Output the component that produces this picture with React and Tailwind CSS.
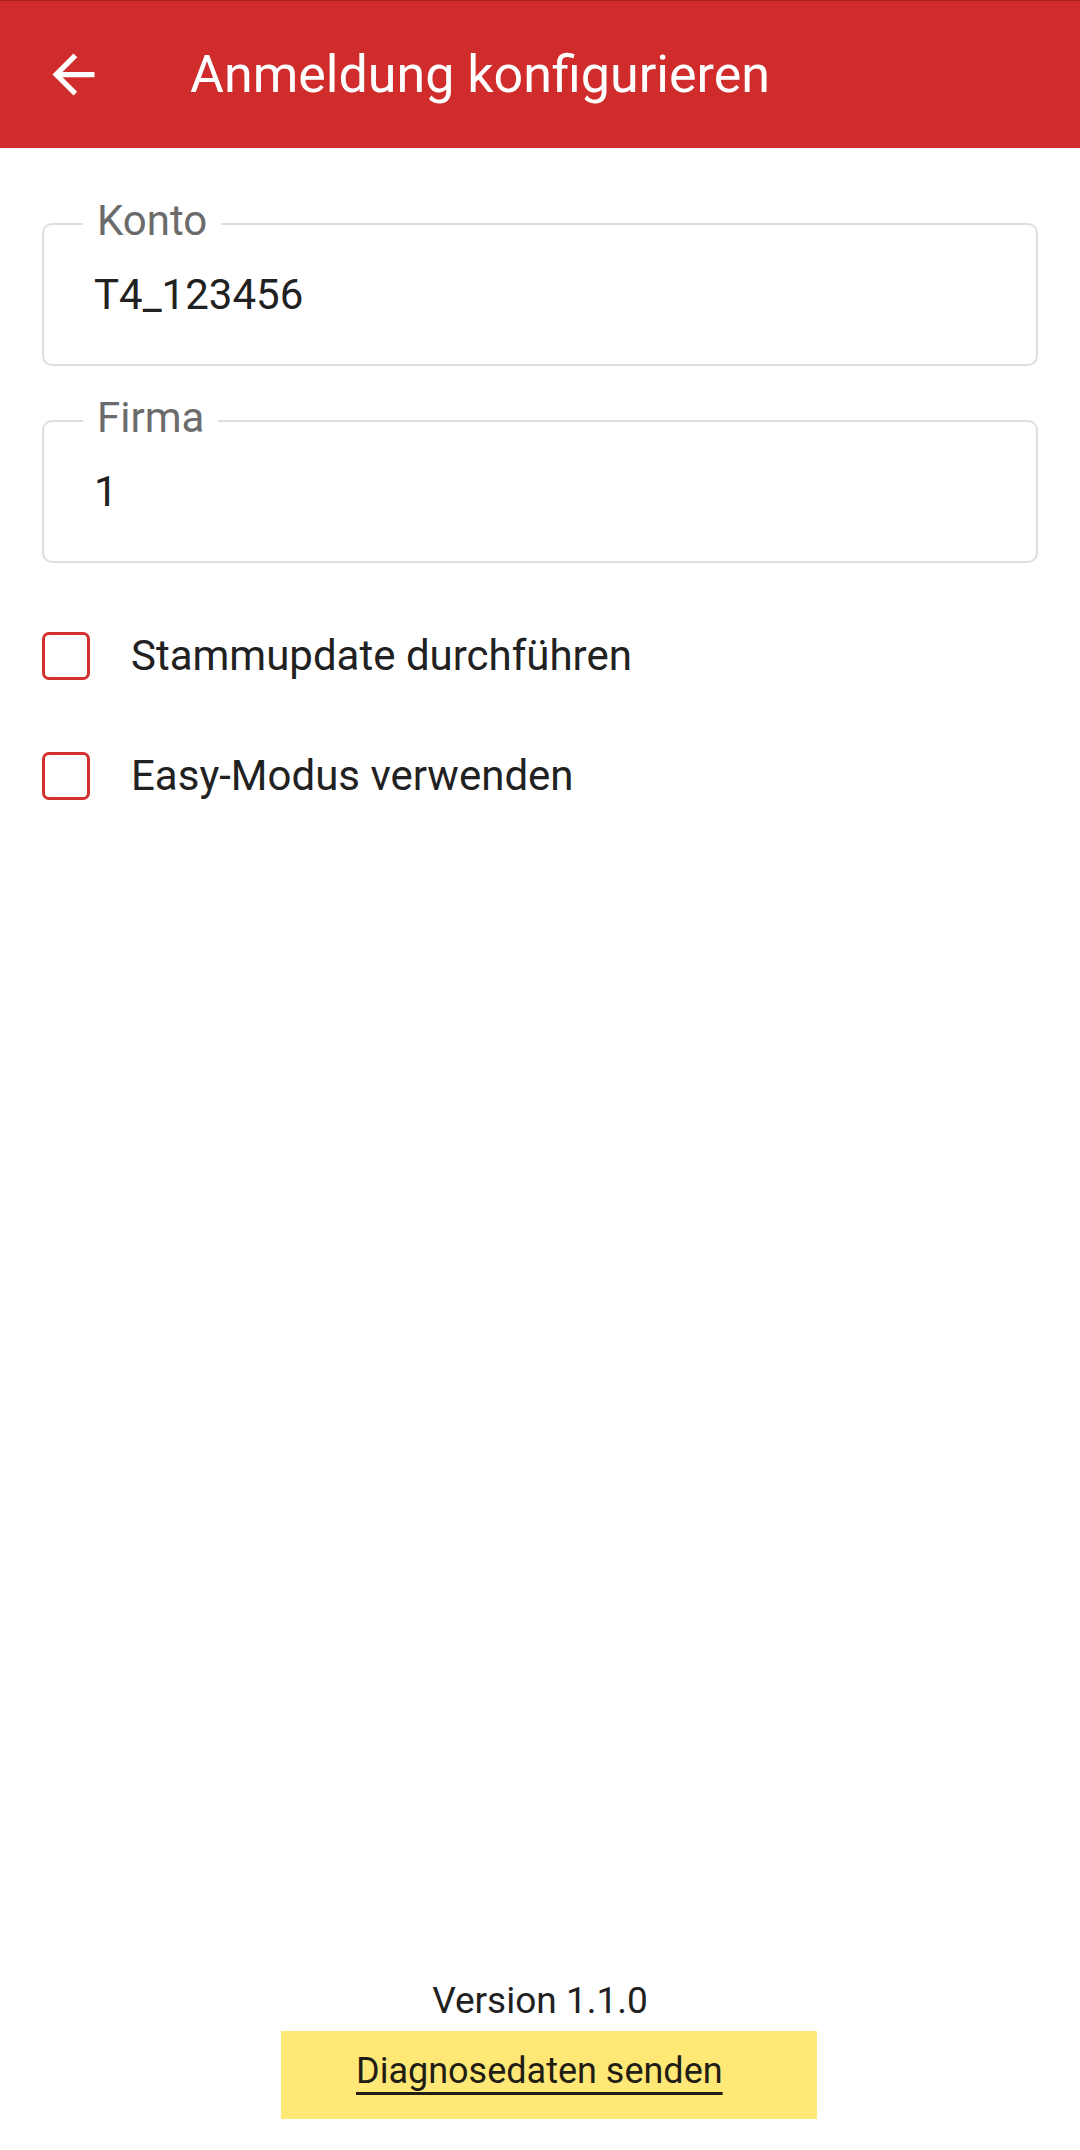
import { useState } from 'react';

const font = { fontFamily: 'Roboto, "Noto Sans", sans-serif' };

function OutlinedField({ label, value }) {
  return (
    <div className="relative h-[143px] border-2 border-[#dedede] rounded-[10px] flex items-center pl-[50px]">
      <span className="absolute -top-[28px] left-[39px] bg-white px-[14px] text-[42px] leading-[48px] text-[#6b6b6b]">
        {label}
      </span>
      <span className="text-[42px] leading-[48px] text-[#212121]">{value}</span>
    </div>
  );
}

function CheckRow({ label, checked, onToggle }) {
  return (
    <button onClick={onToggle} className="h-[120px] flex items-center text-left">
      <span className={`w-[48px] h-[48px] border-[3px] border-[#d32f2f] rounded-[7px] ${checked ? 'bg-[#d32f2f]' : 'bg-white'}`} />
      <span className="ml-[41px] text-[42px] leading-[48px] text-[#212121]">{label}</span>
    </button>
  );
}

export default function App() {
  const [stamm, setStamm] = useState(false);
  const [easy, setEasy] = useState(false);

  return (
    <div style={font} className="min-h-[2150px] flex flex-col bg-white">
      {/* Toolbar */}
      <div className="h-[148px] flex items-center bg-[#d12c2c] border-t border-[#a82424] pl-[42px]">
        <svg width="63" height="63" viewBox="0 0 24 24" fill="#ffffff">
          <path d="M20 11H7.83l5.59-5.59L12 4l-8 8 8 8 1.41-1.41L7.83 13H20v-2z" />
        </svg>
        <span className="ml-[85px] text-[52px] leading-[62px] text-white">Anmeldung konfigurieren</span>
      </div>

      <div className="px-[42px] pt-[75px] flex flex-col">
        <OutlinedField label="Konto" value="T4_123456" />
        <div className="mt-[54px]">
          <OutlinedField label="Firma" value="1" />
        </div>
        <div className="mt-[33px] flex flex-col items-start">
          <CheckRow label="Stammupdate durchführen" checked={stamm} onToggle={() => setStamm(!stamm)} />
          <CheckRow label="Easy-Modus verwenden" checked={easy} onToggle={() => setEasy(!easy)} />
        </div>
      </div>

      <div className="flex-1" />

      {/* Footer */}
      <div className="flex flex-col pb-[31px]">
        <p className="mb-[8px] text-center text-[37px] leading-[44px] text-[#212121]">Version 1.1.0</p>
        <button className="ml-[281px] w-[536px] h-[88px] bg-[#ffe876] text-left pl-[75px] pb-[8px]">
          <span className="text-[36px] leading-[44px] text-[#1f1d14] underline decoration-[3px] underline-offset-[9px]">
            Diagnosedaten senden
          </span>
        </button>
      </div>
    </div>
  );
}
